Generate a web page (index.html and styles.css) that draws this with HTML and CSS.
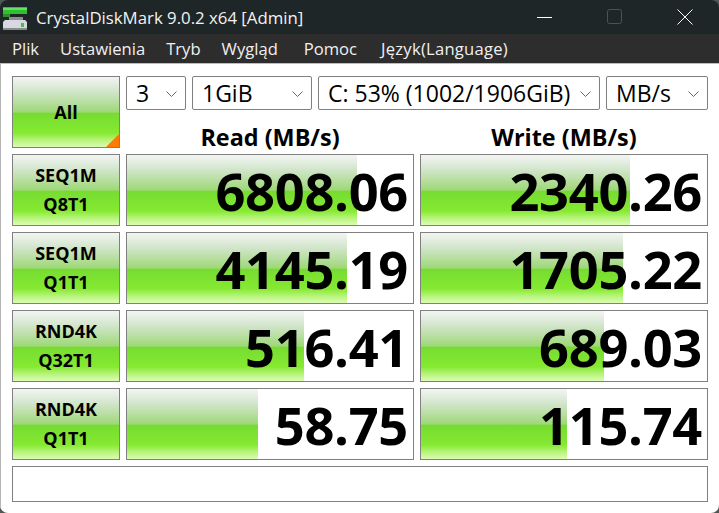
FILE: index.html
```html
<!DOCTYPE html>
<html lang="pl">
<head>
    <meta charset="UTF-8">
    <title>CrystalDiskMark 9.0.2 x64 [Admin]</title>
    <link rel="stylesheet" href="styles.css">
</head>
<body>
    <div class="window">
        <div class="titlebar">
            <svg class="app-icon" width="27" height="27" viewBox="0 0 27 27">
                <rect x="3" y="3" width="24" height="7" fill="#2fc02f"/>
                <rect x="3" y="4" width="24" height="2" fill="#63e263"/>
                <rect x="3" y="10" width="7" height="3" fill="#2b8f2b"/>
                <rect x="9" y="13" width="14" height="3" fill="#8d8d8d"/>
                <path d="M5 16h20l2 2v8H3v-8z" fill="#d8d8e2"/>
                <rect x="3" y="24" width="24" height="2" fill="#8a8a8a"/>
                <rect x="21" y="19" width="3" height="4" fill="#3fc63f"/>
            </svg>
            <span class="title">CrystalDiskMark 9.0.2 x64 [Admin]</span>
            <div class="win-buttons">
                <svg width="16" height="16" viewBox="0 0 16 16"><path d="M0 8.5h15" stroke="#fff" fill="none"/></svg>
                <svg width="16" height="16" viewBox="0 0 16 16"><rect x=".5" y=".5" width="14" height="14" rx="2" stroke="#4d5354" fill="none"/></svg>
                <svg width="16" height="16" viewBox="0 0 16 16"><path d="M.5.5l15 15M15.5.5l-15 15" stroke="#fff" fill="none"/></svg>
            </div>
        </div>
        <div class="menubar">
            <span>Plik</span>
            <span>Ustawienia</span>
            <span>Tryb</span>
            <span>Wygląd</span>
            <span class="menu-help">Pomoc</span>
            <span class="menu-lang">Język(Language)</span>
        </div>
        <div class="content">
            <div class="all-btn grad">All</div>
            <div class="top-right">
                <div class="combos">
                    <div class="combo c-count">3<svg class="chev" width="11" height="6" viewBox="0 0 11 6"><path d="M.5.5l5 5 5-5" stroke="#666" fill="none"/></svg></div>
                    <div class="combo c-size">1GiB<svg class="chev" width="11" height="6" viewBox="0 0 11 6"><path d="M.5.5l5 5 5-5" stroke="#666" fill="none"/></svg></div>
                    <div class="combo c-drive">C: 53% (1002/1906GiB)<svg class="chev" width="11" height="6" viewBox="0 0 11 6"><path d="M.5.5l5 5 5-5" stroke="#666" fill="none"/></svg></div>
                    <div class="combo c-unit">MB/s<svg class="chev" width="11" height="6" viewBox="0 0 11 6"><path d="M.5.5l5 5 5-5" stroke="#666" fill="none"/></svg></div>
                </div>
                <div class="heads">
                    <div class="head">Read (MB/s)</div>
                    <div class="head">Write (MB/s)</div>
                </div>
            </div>

            <div class="test-btn grad">SEQ1M<br>Q8T1</div>
            <div class="result"><div class="fill grad" style="width:230px"></div><span class="value">6808.06</span></div>
            <div class="result"><div class="fill grad" style="width:209px"></div><span class="value">2340.26</span></div>

            <div class="test-btn grad">SEQ1M<br>Q1T1</div>
            <div class="result"><div class="fill grad" style="width:220px"></div><span class="value">4145.19</span></div>
            <div class="result"><div class="fill grad" style="width:202px"></div><span class="value">1705.22</span></div>

            <div class="test-btn grad">RND4K<br>Q32T1</div>
            <div class="result"><div class="fill grad" style="width:177px"></div><span class="value">516.41</span></div>
            <div class="result"><div class="fill grad" style="width:183px"></div><span class="value">689.03</span></div>

            <div class="test-btn grad">RND4K<br>Q1T1</div>
            <div class="result"><div class="fill grad" style="width:131px"></div><span class="value">58.75</span></div>
            <div class="result"><div class="fill grad" style="width:146px"></div><span class="value">115.74</span></div>

            <div class="status"></div>
        </div>
    </div>
</body>
</html>
```

FILE: styles.css
```css
html, body {
    margin: 0;
    padding: 0;
    background-color: #4a5a50;
}

body {
    width: 719px;
    height: 513px;
    overflow: hidden;
    font-family: "Open Sans", "Noto Sans", sans-serif;
    color: #000;
}

.window {
    height: 513px;
    display: flex;
    flex-direction: column;
    border-radius: 8px;
    overflow: hidden;
}

.titlebar {
    height: 34px;
    flex: none;
    display: flex;
    align-items: center;
    background-color: #1f2627;
    color: #f2f2f2;
}

.app-icon {
    flex: none;
}

.title {
    margin-left: 9px;
    font-size: 16.8px;
}

.win-buttons {
    margin-left: auto;
    padding-right: 26px;
    display: flex;
    gap: 54px;
}

.menubar {
    height: 30px;
    flex: none;
    box-sizing: border-box;
    padding-left: 12px;
    display: flex;
    align-items: center;
    gap: 21px;
    background-color: #2d2d2d;
    border-bottom: 1px solid #bdbdbd;
    color: #f0f0f0;
    font-size: 16.6px;
}

.menu-help {
    margin-left: 5px;
    margin-right: 3px;
}

.menu-lang {
    letter-spacing: 0.25px;
}

.content {
    flex: 1;
    box-sizing: border-box;
    padding: 12px 11px 0 11px;
    background-color: #fff;
    border-left: 1px solid #b5b5b5;
    display: grid;
    grid-template-columns: 108px 288px 288px;
    grid-template-rows: 72px 72px 72px 72px 72px 36px;
    gap: 6px;
    align-content: start;
}

.grad {
    background: linear-gradient(to bottom, #f3f5f3 0%, #d3e6cd 20%, #9fd878 50%, #76dc30 52%, #86ea32 80%, #b6f47a 90%, #dcfcb4 100%);
}

.all-btn, .test-btn, .result, .status, .combo {
    box-sizing: border-box;
    border: 1px solid #808080;
}

.all-btn {
    position: relative;
    display: flex;
    align-items: center;
    justify-content: center;
    font-size: 18px;
    font-weight: 700;
}

.all-btn::after {
    content: "";
    position: absolute;
    right: 0;
    bottom: 0;
    border-style: solid;
    border-width: 0 0 13px 13px;
    border-color: transparent transparent #ff7a00 transparent;
}

.top-right {
    grid-column: 2 / 4;
    display: flex;
    flex-direction: column;
}

.combos {
    display: flex;
    gap: 6px;
    height: 36px;
}

.combo {
    position: relative;
    display: flex;
    align-items: center;
    padding-left: 9px;
    border-radius: 2px;
    font-size: 23px;
}

.chev {
    position: absolute;
    right: 8px;
    top: 14px;
}

.c-count { width: 60px; }
.c-size { width: 120px; }
.c-drive { width: 282px; }
.c-unit { width: 102px; }

.heads {
    flex: 1;
    display: grid;
    grid-template-columns: 288px 288px;
    gap: 6px;
}

.head {
    font-size: 23.4px;
    font-weight: 700;
    text-align: center;
    line-height: 54px;
}

.test-btn {
    display: flex;
    align-items: center;
    justify-content: center;
    text-align: center;
    font-size: 18px;
    font-weight: 700;
    line-height: 29px;
}

.result {
    position: relative;
    display: flex;
    align-items: center;
    justify-content: flex-end;
    padding-right: 5px;
    background-color: #fff;
}

.fill {
    position: absolute;
    left: 0;
    top: 0;
    bottom: 0;
}

.value {
    position: relative;
    font-size: 52.4px;
    font-weight: 700;
    letter-spacing: -0.3px;
}

.status {
    grid-column: 1 / 4;
}
```
